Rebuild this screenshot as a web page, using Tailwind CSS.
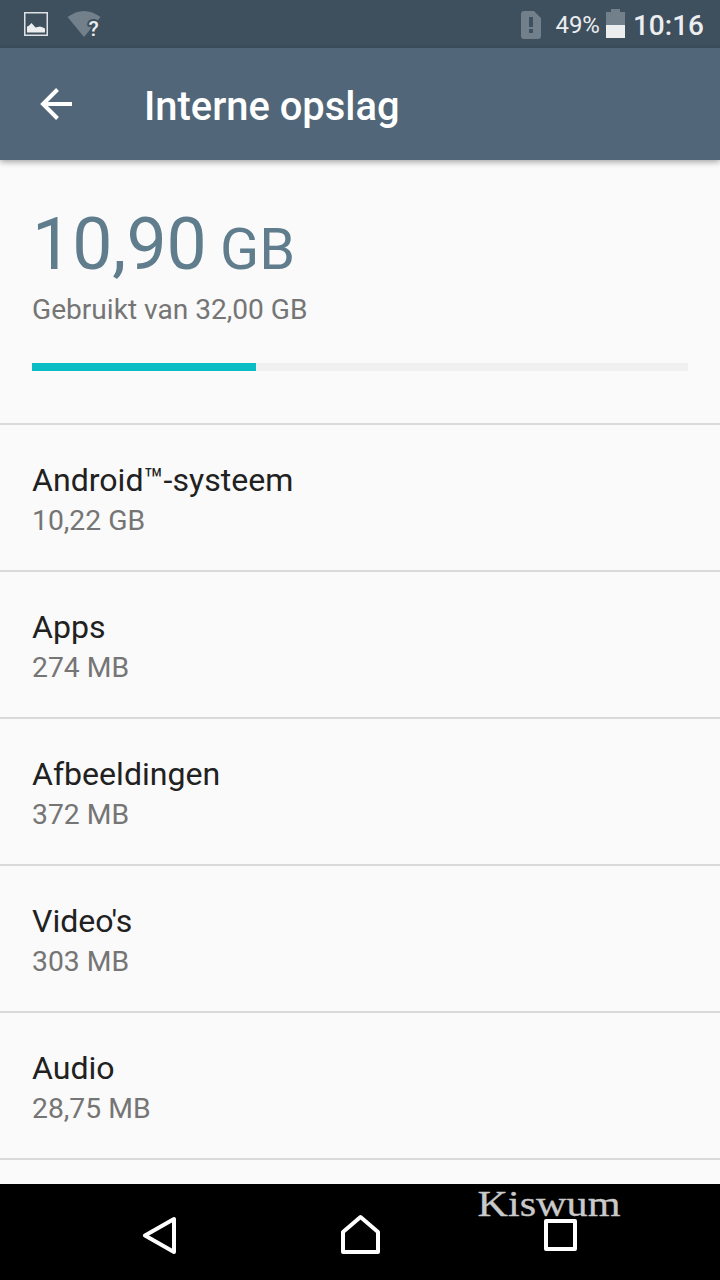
<!DOCTYPE html>
<html lang="nl"><head><meta charset="utf-8"><title>Interne opslag</title>
<script src="https://cdn.jsdelivr.net/npm/@tailwindcss/browser@4"></script></head>
<body class="w-[720px] h-[1280px] overflow-hidden flex flex-col bg-[#fafafa] font-[Roboto,sans-serif]">
<div class="h-12 shrink-0 bg-[#3e4f5d] flex items-center text-[#ebedef]">
<svg width="120" height="48" viewBox="0 0 120 48"><path fill="#dfe2e5" fill-rule="evenodd" d="M24 12h24v24H24zM25.5 13.5v21h21v-21z"/><path fill="#ebedef" d="M27 32.500v-6l1.500-.5 3-3 4 4.500 4.500-1 3 1 2 1v4z"/><path fill="#71808b" d="M67.500 17q16.500-12 33 0L84 37z"/><text x="88.500" y="36" font-size="21" font-weight="500" fill="#ebedef" stroke="#3e4f5d" stroke-width="4" stroke-linejoin="round" paint-order="stroke">?</text></svg>
<div class="flex-1"></div>
<svg class="shrink-0" width="34" height="48" viewBox="0 0 34 48"><path fill="#71808b" fill-rule="evenodd" d="M3 11h10l7 7v18q0 3-3 3H3q-3 0-3-3V14q0-3 3-3zM8 17v10h4V17zM8 29v4h4v-4z"/></svg>
<span class="mt-[2px] text-2xl leading-none">49%</span>
<svg class="ml-[6px]" width="20" height="48" viewBox="0 0 20 48"><path fill="#71808b" d="M5 9h9v3h5v13H0V12h5z"/><path fill="#ebedef" d="M0 25h19v13H0z"/></svg>
<span class="ml-[7px] mr-4 mt-[3px] text-[28px] leading-none font-medium">10:16</span></div>
<header class="h-28 shrink-0 bg-[#516779] text-white flex items-center shadow-[0_2px_6px_rgba(0,0,0,0.35)]"><svg class="ml-8" width="48" height="48" viewBox="0 0 48 48" fill="none" stroke="#fff" stroke-width="4"><path d="M40 24H12M25.500 9.500 11 24l14.500 14.500"/></svg><h1 class="ml-16 mt-[5px] text-[39.900px] leading-[48px] font-medium">Interne opslag</h1></header>
<section class="h-[263px] shrink-0 px-8"><div class="pt-[43px] text-[71.5px] leading-[84px] h-[127px] text-[#5f7d8d]">10,90<span class="ml-[-1px] text-[57.500px]"> GB</span></div><p class="mt-[3px] h-10 text-[28.100px] leading-10 text-[#757575]">Gebruikt van 32,00 GB</p><div class="mt-[33px] h-2 bg-[#f0f0f0]"><div class="h-2 w-56 bg-[#0bbdc5]"></div></div></section>
<ul class="flex-1 overflow-hidden text-[28.300px] leading-[42px] text-[#757575]">
<li class="h-[147px] border-t-2 border-[#dadada] px-8 pt-[35px]"><h2 class="text-[32.100px] leading-10 text-[#212121]">Android™-systeem</h2><p>10,22 GB</p></li>
<li class="h-[147px] border-t-2 border-[#dadada] px-8 pt-[35px]"><h2 class="text-[32.100px] leading-10 text-[#212121]">Apps</h2><p>274 MB</p></li>
<li class="h-[147px] border-t-2 border-[#dadada] px-8 pt-[35px]"><h2 class="text-[32.100px] leading-10 text-[#212121]">Afbeeldingen</h2><p>372 MB</p></li>
<li class="h-[147px] border-t-2 border-[#dadada] px-8 pt-[35px]"><h2 class="text-[32.100px] leading-10 text-[#212121]">Video's</h2><p>303 MB</p></li>
<li class="h-[147px] border-t-2 border-[#dadada] px-8 pt-[35px]"><h2 class="text-[32.100px] leading-10 text-[#212121]">Audio</h2><p>28,75 MB</p></li>
<li class="h-[147px] border-t-2 border-[#dadada]"></li>
</ul>
<nav class="h-24 shrink-0 bg-black"><svg width="720" height="96" viewBox="0 0 720 96" fill="none" stroke="#fff" stroke-width="4" stroke-linejoin="round"><path d="M145 51.500 174 35v33zM343 68V48l17.500-15L378 48v20z"/><path d="M546 37h29v28h-29z"/><text x="477.500" y="32" font-family="Liberation Serif, serif" font-size="36" fill="#c9c9c9" stroke="#c9c9c9" stroke-width=".3" textLength="143" lengthAdjust="spacingAndGlyphs">Kiswum</text></svg></nav>
</body></html>
